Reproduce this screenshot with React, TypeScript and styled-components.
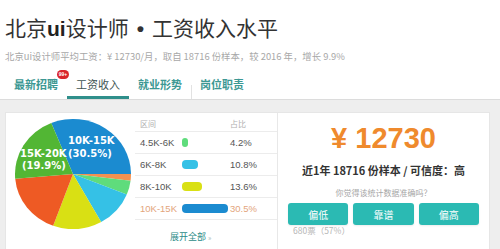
import React from "react";
import styled, { createGlobalStyle } from "styled-components";

const GlobalStyle = createGlobalStyle`
  html, body {
    margin: 0;
    padding: 0;
    background: #ffffff;
  }
  body {
    font-family: "Noto Sans CJK SC", "Noto Sans", sans-serif;
    color: #333333;
  }
  * {
    box-sizing: border-box;
  }
`;

const Page = styled.div`
  width: 500px;
  height: 249px;
  overflow: hidden;
  display: flex;
  flex-direction: column;
`;

const Header = styled.header`
  padding: 0 5px;
  border-bottom: 1px solid #dcdcdc;
`;

const Title = styled.h1`
  margin: 14px 0 0;
  font-size: 21px;
  line-height: 26px;
  font-weight: 400;
  color: #333;
  white-space: nowrap;
`;

const Latin = styled.span`
  font-family: "Liberation Sans", sans-serif;
  font-weight: 700;
  color: #222;
`;

const Dot = styled.span`
  font-family: "Liberation Sans", sans-serif;
  font-weight: 700;
  margin: 0 8px;
  color: #333;
`;

const Subtitle = styled.p`
  margin: 8px 0 0;
  font-size: 9.4px;
  line-height: 12px;
  color: #a8a8a8;
  white-space: nowrap;
`;

const Tabs = styled.nav`
  display: flex;
  margin-top: 10px;
`;

const Tab = styled.div<{ $active?: boolean }>`
  position: relative;
  height: 27px;
  padding: 0 9px;
  font-size: 11px;
  line-height: 25px;
  font-weight: ${(p) => (p.$active ? 400 : 700)};
  color: ${(p) => (p.$active ? "#3e5553" : "#3c9893")};
  border-bottom: 3px solid ${(p) => (p.$active ? "#2f8f8b" : "transparent")};
  white-space: nowrap;

  & + &::before {
    content: "";
    position: absolute;
    left: 0;
    bottom: -3px;
    width: 1px;
    height: 14px;
    background: #e2e2e2;
  }
`;

const TabLabel = styled.span`
  position: relative;
`;

const Badge = styled.span`
  position: absolute;
  right: -11px;
  top: -6px;
  width: 12px;
  height: 9px;
  border-radius: 5px;
  background: #d9262b;
  color: #fff;
  font-family: "Liberation Sans", sans-serif;
  font-size: 5px;
  line-height: 9px;
  font-weight: 700;
  text-align: center;
`;

const Content = styled.main`
  flex: 1;
  background: #eeeeee;
  padding: 12px 10px 0 5px;
  display: flex;
`;

const Card = styled.section`
  flex: 1;
  background: #ffffff;
  border: 1px solid #e6e6e6;
  border-bottom: none;
  display: flex;
`;

const LeftPanel = styled.div`
  width: 272px;
  display: flex;
  border-right: 1px solid #e8e8e8;
`;

const PieBox = styled.div`
  margin: 6px 0 0 9px;
  width: 116px;
  height: 110px;
`;

const Table = styled.div`
  flex: 1;
  margin-left: 4px;
  display: flex;
  flex-direction: column;
  font-family: "Liberation Sans", "Noto Sans CJK SC", sans-serif;
`;

const HeadRow = styled.div`
  display: grid;
  grid-template-columns: 42px 48px 1fr;
  align-items: center;
  height: 19px;
  padding: 3px 0 0 5px;
  border-bottom: 1px solid #ececec;
  font-size: 8px;
  color: #b0b0b0;
`;

const Row = styled.div<{ $hl?: boolean }>`
  display: grid;
  grid-template-columns: 42px 48px 1fr;
  align-items: center;
  height: 22px;
  padding-left: 5px;
  border-bottom: 1px solid #ececec;
  font-size: 9.5px;
  color: ${(p) => (p.$hl ? "#e3a57c" : "#555555")};
`;

const Bar = styled.span<{ $color: string }>`
  display: block;
  height: 9px;
  border-radius: 4px;
  background: ${(p) => p.$color};
`;

const More = styled.div`
  margin: 10px 0 0 35px;
  font-size: 9px;
  line-height: 14px;
  color: #2d8c88;
  font-family: "Noto Sans CJK SC", sans-serif;
`;

const Arrow = styled.span`
  font-size: 7px;
  color: #9fb9b8;
  margin-left: 2px;
`;

const RightPanel = styled.div`
  flex: 1;
  display: flex;
  flex-direction: column;
  align-items: center;
`;

const Price = styled.div`
  margin-top: 10px;
  font-family: "Liberation Sans", sans-serif;
  font-weight: 700;
  font-size: 29px;
  line-height: 30px;
  color: #ef8a2d;
  white-space: pre;
`;

const Meta = styled.div`
  margin-top: 9px;
  font-size: 11px;
  line-height: 16px;
  font-weight: 700;
  color: #333;
  white-space: nowrap;
`;

const Question = styled.div`
  margin-top: 9px;
  font-size: 8px;
  line-height: 12px;
  color: #a6a6a6;
`;

const VoteBox = styled.div`
  margin-top: 4px;
  width: 191px;
`;

const Buttons = styled.div`
  display: grid;
  grid-template-columns: repeat(3, 1fr);
  gap: 5px;
`;

const VoteButton = styled.button`
  height: 22px;
  border: none;
  border-radius: 3px;
  background: #2bbab3;
  color: #ffffff;
  font-family: "Noto Sans CJK SC", sans-serif;
  font-size: 10px;
  padding: 0;
  box-shadow: 0 1px 2px rgba(0, 0, 0, 0.08);
`;

const Votes = styled.div`
  padding-left: 5px;
  font-size: 8.5px;
  line-height: 11px;
  color: #b5b5b5;
`;

type Slice = { from: number; to: number; color: string };

const slices: Slice[] = [
  { from: -22, to: 90, color: "#1b8bd0" },
  { from: 90, to: 97, color: "#f39150" },
  { from: 97, to: 112, color: "#5fdc7c" },
  { from: 112, to: 151, color: "#35c1e6" },
  { from: 151, to: 200, color: "#d9e014" },
  { from: 200, to: 265, color: "#ee5a24" },
  { from: 265, to: 338, color: "#52b634" },
];

const CX = 58;
const CY = 55;
const RX = 58;
const RY = 55;

const point = (deg: number) => {
  const a = (deg * Math.PI) / 180;
  return [CX + RX * Math.sin(a), CY - RY * Math.cos(a)];
};

const slicePath = ({ from, to }: Slice) => {
  const [x1, y1] = point(from);
  const [x2, y2] = point(to);
  const large = to - from > 180 ? 1 : 0;
  return `M${CX} ${CY} L${x1} ${y1} A${RX} ${RY} 0 ${large} 1 ${x2} ${y2} Z`;
};

const PieChart = () => (
  <svg width="116" height="110" viewBox="0 0 116 110">
    {slices.map((s) => (
      <path key={s.from} d={slicePath(s)} fill={s.color} />
    ))}
    <g
      fill="#ffffff"
      fontFamily="DejaVu Sans, sans-serif"
      fontWeight="700"
      fontSize="10"
    >
      <text x="53" y="25">10K-15K</text>
      <text x="53" y="38">(30.5%)</text>
      <text x="5" y="38">15K-20K</text>
      <text x="7" y="50">(19.9%)</text>
    </g>
  </svg>
);

const rows = [
  { range: "4.5K-6K", pct: 4.2, color: "#5fdc7c" },
  { range: "6K-8K", pct: 10.8, color: "#35c1e6" },
  { range: "8K-10K", pct: 13.6, color: "#d9e014" },
  { range: "10K-15K", pct: 30.5, color: "#1b8bd0", hl: true },
];

export default function App() {
  return (
    <Page>
      <GlobalStyle />
      <Header>
        <Title>
          北京<Latin>ui</Latin>设计师<Dot>•</Dot>工资收入水平
        </Title>
        <Subtitle>
          北京ui设计师平均工资：¥ 12730/月，取自 18716 份样本，较 2016 年，增长 9.9%
        </Subtitle>
        <Tabs>
          <Tab>
            <TabLabel>
              最新招聘
              <Badge>99+</Badge>
            </TabLabel>
          </Tab>
          <Tab $active>工资收入</Tab>
          <Tab>就业形势</Tab>
          <Tab>岗位职责</Tab>
        </Tabs>
      </Header>
      <Content>
        <Card>
          <LeftPanel>
            <PieBox>
              <PieChart />
            </PieBox>
            <Table>
              <HeadRow>
                <span>区间</span>
                <span />
                <span>占比</span>
              </HeadRow>
              {rows.map((r) => (
                <Row key={r.range} $hl={r.hl}>
                  <span>{r.range}</span>
                  <span>
                    <Bar $color={r.color} style={{ width: r.pct * 1.5 }} />
                  </span>
                  <span>{r.pct}%</span>
                </Row>
              ))}
              <More>
                展开全部<Arrow>»</Arrow>
              </More>
            </Table>
          </LeftPanel>
          <RightPanel>
            <Price>¥ 12730</Price>
            <Meta>近1年 18716 份样本 / 可信度：高</Meta>
            <Question>你觉得该统计数据准确吗？</Question>
            <VoteBox>
              <Buttons>
                <VoteButton>偏低</VoteButton>
                <VoteButton>靠谱</VoteButton>
                <VoteButton>偏高</VoteButton>
              </Buttons>
              <Votes>680票（57%）</Votes>
            </VoteBox>
          </RightPanel>
        </Card>
      </Content>
    </Page>
  );
}
